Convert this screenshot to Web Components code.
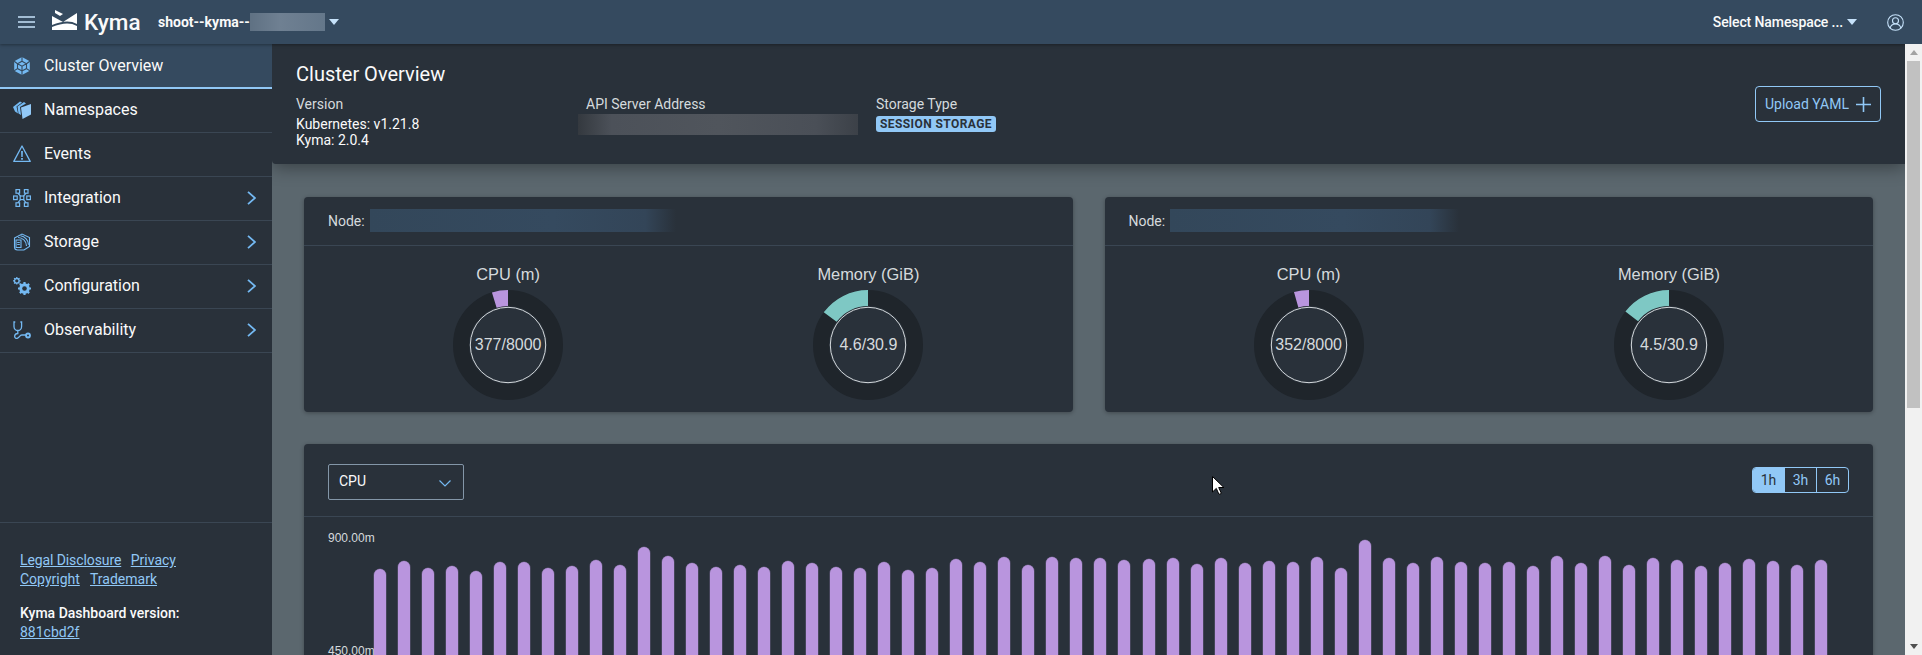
<!DOCTYPE html>
<html lang="en">
<head>
<meta charset="utf-8">
<title>Kyma</title>
<style>
  html, body { margin: 0; height: 100%; overflow: hidden; background: #5b676e; }
  body { font-family: Roboto, "Liberation Sans", sans-serif; color: #fafafa; }
  #app { display: grid; grid-template-columns: 272px 1fr; grid-template-rows: 44px 1fr; height: 100vh; }
  shell-bar { grid-column: 1 / 3; }
  #main { display: flex; min-width: 0; min-height: 0; overflow: hidden; }
  #content { flex: 1; min-width: 0; }
  #cards { display: grid; grid-template-columns: 1fr 1fr; gap: 32px; padding: 33px 32px 32px; }
  #cursor { position: absolute; left: 1212px; top: 476px; }
</style>
</head>
<body>
<div id="app">
  <shell-bar></shell-bar>
  <side-nav>
    <nav-item label="Cluster Overview" active>
      <svg slot="icon" viewBox="0 0 18 18"><path fill="#74b9f2" d="M9 0l7.800 4.300v9.400L9 18l-7.800-4.300V4.300z"/><path fill="none" stroke="#354a5f" stroke-width="1.100" d="M9 4.200l4.500 2.500v4.900L9 14l-4.500-2.400V6.700zM4.500 6.700L9 9.200l4.500-2.500M9 9.200V14M9 0v4.200M1.200 4.300l3.300 2.400M16.800 4.300l-3.300 2.400M1.200 13.700l3.300-2.100M16.800 13.700l-3.300-2.100M9 14v4"/></svg>
    </nav-item>
    <nav-item label="Namespaces">
      <svg slot="icon" viewBox="0 0 18 18"><path fill="#74b9f2" d="M0 6l7-5.500 2 1L3.500 5.500 5 12.500 2 10.500zM4.500 5.500L11 1l2 1.500L7 6l1 8-2.500-1.500z"/><path fill="#92c9f7" d="M8 6.500L18 3v10.500L9.500 18z"/></svg>
    </nav-item>
    <nav-item label="Events">
      <svg slot="icon" viewBox="0 0 18 18"><path fill="none" stroke="#74b9f2" stroke-width="1.300" stroke-linejoin="round" d="M9 1L.8 16.400h16.400z"/><path fill="#74b9f2" d="M8.100 6h1.800l-.2 6H8.300zM8.100 13h1.800v1.800H8.100z"/></svg>
    </nav-item>
    <nav-item label="Integration" expandable>
      <svg slot="icon" viewBox="0 0 18 18"><g fill="none" stroke="#74b9f2" stroke-width="1.200"><rect x="3" y=".6" width="3.600" height="3.600"/><rect x="11.400" y=".6" width="3.600" height="3.600"/><rect x="3" y="13.800" width="3.600" height="3.600"/><rect x="11.400" y="13.800" width="3.600" height="3.600"/><rect x=".6" y="7" width="3.600" height="3.600"/><rect x="7.200" y="7" width="3.600" height="3.600"/><rect x="13.800" y="7" width="3.600" height="3.600"/><path d="M4.800 4.200L7.500 7M13.200 4.200L10.500 7M4.800 13.800l2.700-3.200M13.200 13.800l-2.700-3.200"/></g></svg>
    </nav-item>
    <nav-item label="Storage" expandable>
      <svg slot="icon" viewBox="0 0 18 18"><g fill="none" stroke="#74b9f2" stroke-width="1.100"><path d="M1.500 5L9 1l7.500 3.500v9L11 17H4.500c-1.700 0-3-1.300-3-3z"/><path d="M5 4.500c4.500 0 8.500 3.500 8.500 8.500M7.500 2.800c4.500 .5 8 4.500 8 9M3 7h5v7.500H3zM4.200 9.500h2.600M4.200 11.500h2.600"/></g></svg>
    </nav-item>
    <nav-item label="Configuration" expandable>
      <svg slot="icon" viewBox="0 0 18 18"><circle cx="11.500" cy="11.500" r="3.900" fill="none" stroke="#74b9f2" stroke-width="2.600"/><path stroke="#74b9f2" stroke-width="2.200" d="M11.500 5v13M5 11.500h13M6.900 6.900l9.200 9.200M16.100 6.900l-9.200 9.200"/><circle cx="11.500" cy="11.500" r="2.300" fill="#29313a"/><circle cx="3.800" cy="3.800" r="2.300" fill="none" stroke="#74b9f2" stroke-width="1.300"/><path stroke="#74b9f2" stroke-width="1.200" d="M3.800 0v1.500M3.800 6.100v1.500M0 3.800h1.500M6.100 3.800h1.500M1.100 1.100l1 1M5.500 5.500l1 1M6.500 1.100l-1 1M2.100 5.500l-1 1"/></svg>
    </nav-item>
    <nav-item label="Observability" expandable>
      <svg slot="icon" viewBox="0 0 18 18"><path fill="none" stroke="#74b9f2" stroke-width="1.300" stroke-linecap="round" d="M1.800 1H1v4.500c0 2.500 2 4 3.800 4s3.800-1.500 3.800-4V1h-.8M4.800 9.500v3C1 12.500 .6 17.400 3.800 17.400c2.600 0 2.600-3.400 5-3.400h4"/><circle cx="15" cy="14.500" r="2.900" fill="#74b9f2"/><circle cx="15" cy="14.500" r="1" fill="#29313a"/></svg>
    </nav-item>
  </side-nav>
  <div id="main">
    <div id="content">
      <page-head></page-head>
      <div id="cards">
        <node-card blur="306">
          <donut-gauge title="CPU (m)" used="377" total="8000" color="#b995de"></donut-gauge>
          <donut-gauge title="Memory (GiB)" used="4.6" total="30.9" color="#7ec8c4"></donut-gauge>
        </node-card>
        <node-card blur="289">
          <donut-gauge title="CPU (m)" used="352" total="8000" color="#b995de"></donut-gauge>
          <donut-gauge title="Memory (GiB)" used="4.5" total="30.9" color="#7ec8c4"></donut-gauge>
        </node-card>
        <metrics-card style="grid-column: 1 / 3"></metrics-card>
      </div>
    </div>
    <page-scrollbar></page-scrollbar>
  </div>
</div>
<svg id="cursor" width="13" height="19" viewBox="0 0 13 19"><path fill="#fff" stroke="#000" stroke-width="1" d="M.5 .5v15.500l3.800-3.600 2.700 6 2.400-1-2.700-5.900h5.200z"/></svg>

<script>
const UI_FONT = 'Roboto, "Liberation Sans", sans-serif';

class ShellBar extends HTMLElement {
  constructor() {
    super();
    this.attachShadow({ mode: 'open' });
  }

  connectedCallback() {
    this.shadowRoot.innerHTML = `
      <style>
        :host { display: flex; align-items: center; height: 44px; background: #354a5f; position: relative; z-index: 3;
          box-shadow: 0 1px 3px rgba(0,0,0,.35); font-family: ${UI_FONT}; color: #fafafa; }
        .menu { margin-left: 18px; width: 17px; height: 12px; display: block; }
        .logo { margin-left: 17px; width: 25px; height: 20px; margin-top: -4px; }
        .brand { margin-left: 7px; font-size: 22.500px; font-weight: 500; width: 74px; }
        .cluster { font-size: 14px; font-weight: 700; }
        .blur { width: 75px; height: 18px; background: linear-gradient(90deg, #5f7183, #6f8092 40%, #64778a); }
        .caret { width: 0; height: 0; border: 5px solid transparent; border-top: 6px solid #c6e2fa; border-bottom: 0; }
        .cluster + .blur + .caret { margin-left: 4px; }
        .right { margin-left: auto; display: flex; align-items: center; }
        .ns { font-size: 14px; font-weight: 500; margin-right: 4px; letter-spacing: -.1px; }
        .user { margin: 0 18px 0 30px; width: 17px; height: 17px; }
      </style>
      <svg class="menu" viewBox="0 0 17 12"><path stroke="#c6e2fa" stroke-width="1.400" d="M0 1h17M0 6h17M0 11h17"/></svg>
      <svg class="logo" viewBox="0 0 25 20"><path fill="#fff" d="M3 0l8 4-3 2-5-3zM0 6l11 6L25 3v11c-7-4-15-3-25 1zM0 17c10-4 18-5 25-1v4H0z"/></svg>
      <span class="brand">Kyma</span>
      <span class="cluster">shoot--kyma--</span>
      <span class="blur"></span>
      <span class="caret"></span>
      <div class="right">
        <span class="ns">Select Namespace ...</span>
        <span class="caret"></span>
        <svg class="user" viewBox="0 0 17 17"><g fill="none" stroke="#c6e2fa" stroke-width="1.100"><circle cx="8.500" cy="8.500" r="7.800"/><circle cx="8.500" cy="6.800" r="3"/><path d="M3.200 14c.6-2.800 2.800-4 5.300-4s4.700 1.200 5.300 4"/></g></svg>
      </div>
    `;
  }
}

class SideNav extends HTMLElement {
  constructor() {
    super();
    this.attachShadow({ mode: 'open' });
  }

  connectedCallback() {
    this.shadowRoot.innerHTML = `
      <style>
        :host { display: flex; flex-direction: column; background: #29313a; min-height: 0; font-family: ${UI_FONT}; color: #fafafa; }
        .items { flex: 1; }
        footer { height: 133px; box-sizing: border-box; border-top: 1px solid #3a4653; padding: 28px 20px 0; font-size: 14px; line-height: 19px; }
        a { color: #91c8f6; text-decoration: underline; margin-right: 7px; }
        .legal { letter-spacing: -.1px; margin-right: 6px; }
        .version { margin-top: 15px; font-weight: 500; }
      </style>
      <div class="items"><slot></slot></div>
      <footer>
        <div><a class="legal">Legal Disclosure</a> <a>Privacy</a></div>
        <div><a>Copyright</a> <a>Trademark</a></div>
        <div class="version">Kyma Dashboard version:</div>
        <div><a>881cbd2f</a></div>
      </footer>
    `;
  }
}

class NavItem extends HTMLElement {
  constructor() {
    super();
    this.attachShadow({ mode: 'open' });
  }

  connectedCallback() {
    const chevron = this.hasAttribute('expandable')
      ? '<svg class="chevron" viewBox="0 0 9 14"><path fill="none" stroke="#74b9f2" stroke-width="1.800" d="M1 .8L8 7l-7 6.200"/></svg>'
      : '';
    this.shadowRoot.innerHTML = `
      <style>
        :host { display: flex; align-items: center; height: 44px; box-sizing: border-box; padding-bottom: 2px; border-bottom: 1px solid #3a4653; font-size: 16px; }
        :host([active]) { height: 45px; padding-bottom: 0; background: #354a5f; border-bottom: 2px solid #91c8f6; }
        .icon { width: 18px; height: 18px; margin: 0 13px; display: block; }
        ::slotted(svg) { width: 18px; height: 18px; display: block; }
        .chevron { margin-left: auto; margin-right: 16px; width: 9px; height: 14px; }
      </style>
      <span class="icon"><slot name="icon"></slot></span>
      <span>${this.getAttribute('label')}</span>
      ${chevron}
    `;
  }
}

class PageHead extends HTMLElement {
  constructor() {
    super();
    this.attachShadow({ mode: 'open' });
  }

  connectedCallback() {
    this.shadowRoot.innerHTML = `
      <style>
        :host { display: flex; align-items: center; height: 120px; box-sizing: border-box; padding: 16px 24px; background: #29313a;
          box-shadow: 0 3px 18px rgba(0,0,0,.4); border-bottom-left-radius: 4px; position: relative; z-index: 2;
          font-family: ${UI_FONT}; color: #fafafa; }
        .left { flex: 1; }
        h1 { margin: 0 0 6px; font-size: 20px; line-height: 28px; font-weight: 400; }
        .cols { display: grid; grid-template-columns: 290px 290px 1fr; }
        .label { font-size: 14px; line-height: 20px; color: #d5dadd; margin-bottom: 2px; }
        .value { font-size: 14px; line-height: 16px; }
        .blur { margin: -2px 0 0 -8px; width: 280px; height: 21px; background: linear-gradient(90deg, #34393f, #4c5159 12%, #50555c 50%, #4a4f57 85%, #3c4148); }
        .badge { display: block; width: fit-content; margin-top: 2px; background: #91c8f6; color: #29313a; font-size: 12px; font-weight: 700; line-height: 16px;
          padding: 0 4px; border-radius: 3px; text-transform: uppercase; letter-spacing: .42px; }
        button { width: 126px; height: 36px; box-sizing: border-box; background: transparent; color: #91c8f6; border: 1px solid #91c8f6;
          border-radius: 4px; font: 14px ${UI_FONT}; display: flex; align-items: center; justify-content: center; gap: 7px; padding: 0; }
        button svg { width: 15px; height: 15px; }
      </style>
      <div class="left">
        <h1>Cluster Overview</h1>
        <div class="cols">
          <div><div class="label">Version</div><div class="value">Kubernetes: v1.21.8</div><div class="value">Kyma: 2.0.4</div></div>
          <div><div class="label">API Server Address</div><div class="blur"></div></div>
          <div><div class="label">Storage Type</div><span class="badge">Session Storage</span></div>
        </div>
      </div>
      <button>Upload YAML <svg viewBox="0 0 15 15"><path stroke="#91c8f6" stroke-width="1.600" d="M7.500 0v15M0 7.500h15"/></svg></button>
    `;
  }
}

class NodeCard extends HTMLElement {
  constructor() {
    super();
    this.attachShadow({ mode: 'open' });
  }

  connectedCallback() {
    const blur = this.getAttribute('blur') || 250;
    this.shadowRoot.innerHTML = `
      <style>
        :host { display: block; background: #29313a; border-radius: 4px; box-shadow: 0 1px 4px rgba(0,0,0,.3); font-family: ${UI_FONT}; color: #fafafa; }
        header { display: flex; align-items: center; height: 49px; box-sizing: border-box; padding: 0 24px; border-bottom: 1px solid #3a4653;
          font-size: 14px; color: #d5dadd; gap: 5px; }
        .blur { width: ${blur}px; height: 23px; margin-top: -2px; background: linear-gradient(90deg, #33475a, #354a5f 60%, #334558 90%, #29313a); }
        .gauges { display: grid; grid-template-columns: 1fr 1fr; padding: 17px 24px 12px; }
      </style>
      <header><span>Node:</span><span class="blur"></span></header>
      <div class="gauges"><slot></slot></div>
    `;
  }
}

class DonutGauge extends HTMLElement {
  constructor() {
    super();
    this.attachShadow({ mode: 'open' });
  }

  connectedCallback() {
    const used = parseFloat(this.getAttribute('used'));
    const total = parseFloat(this.getAttribute('total'));
    const angle = used / total * 2 * Math.PI;
    const point = r => `${(55 - r * Math.sin(angle)).toFixed(2)} ${(55 - r * Math.cos(angle)).toFixed(2)}`;
    this.shadowRoot.innerHTML = `
      <style>
        :host { display: flex; flex-direction: column; align-items: center; font-family: "Liberation Sans", Arial, sans-serif; color: #d5dadd; font-size: 16px; }
        .title { font-size: 16.400px; line-height: 20px; margin: 1px 0 6px; }
        .ring { position: relative; width: 110px; height: 110px; }
        svg { display: block; }
        .value { position: absolute; inset: 0; display: flex; align-items: center; justify-content: center; }
      </style>
      <div class="title">${this.getAttribute('title')}</div>
      <div class="ring">
        <svg width="110" height="110" viewBox="0 0 110 110">
          <circle cx="55" cy="55" r="47" fill="none" stroke="#1f252b" stroke-width="16"/>
          <path fill="${this.getAttribute('color')}" d="M55 0A55 55 0 0 0 ${point(55)}L${point(39)}A39 39 0 0 1 55 16z"/>
          <circle cx="55" cy="55" r="37.700" fill="none" stroke="#d5dadd" stroke-width="1"/>
        </svg>
        <div class="value">${this.getAttribute('used')}/${this.getAttribute('total')}</div>
      </div>
    `;
  }
}

class BarChart extends HTMLElement {
  constructor() {
    super();
    this.attachShadow({ mode: 'open' });
  }

  connectedCallback() {
    // y of each bar top, counted from the top of the chart body (y 517)
    const tops = [569,561,568,566,571,562,562,568,566,560,565,547,556,563,567,565,567,561,563,567,568,562,570,568,559,562,557,565,557,558,558,560,559,558,564,558,563,561,562,557,568,540,558,563,557,562,563,562,566,556,563,556,565,558,560,566,563,559,561,565,560];
    const bars = tops.map(top => `<i style="margin-top:${top - 517}px"></i>`).join('');
    this.shadowRoot.innerHTML = `
      <style>
        :host { display: flex; padding-left: 24px; height: 240px; font-family: "Liberation Sans", Arial, sans-serif; }
        .axis { width: 46px; padding-top: 14px; font-size: 12px; line-height: 14px; color: #d5dadd; }
        .axis div + div { margin-top: 99px; }
        .bars { display: flex; gap: 12.030px; align-items: stretch; }
        i { display: block; width: 12px; background: #b995de; border-radius: 6px 6px 0 0; box-shadow: 0 0 0 .5px rgba(185,149,222,.4); }
      </style>
      <div class="axis"><div>900.00m</div><div>450.00m</div></div>
      <div class="bars">${bars}</div>
    `;
  }
}

class MetricsCard extends HTMLElement {
  constructor() {
    super();
    this.attachShadow({ mode: 'open' });
  }

  connectedCallback() {
    this.shadowRoot.innerHTML = `
      <style>
        :host { display: block; background: #29313a; border-radius: 4px; box-shadow: 0 1px 4px rgba(0,0,0,.3); font-family: ${UI_FONT}; color: #fafafa; }
        header { display: flex; align-items: center; justify-content: space-between; height: 73px; box-sizing: border-box;
          padding: 20px 24px 16px; border-bottom: 1px solid #3a4653; }
        .select { display: flex; align-items: center; justify-content: space-between; width: 136px; height: 36px; box-sizing: border-box;
          border: 1px solid #8396a8; border-radius: 2px; padding: 0 12px 2px 10px; font-size: 14px; }
        .select svg { width: 12px; height: 7px; margin-top: 5px; }
        .range { display: flex; height: 26px; box-sizing: border-box; border: 1px solid #91c8f6; border-radius: 4px; overflow: hidden; margin-top: -4px; }
        .range span { display: flex; align-items: center; justify-content: center; width: 31px; font-size: 14px; color: #91c8f6; }
        .range span + span { border-left: 1px solid #91c8f6; }
        .range .on { background: #91c8f6; color: #29313a; }
      </style>
      <header>
        <div class="select"><span>CPU</span><svg viewBox="0 0 12 7"><path fill="none" stroke="#74b9f2" stroke-width="1.200" d="M.5 .5L6 6l5.500-5.500"/></svg></div>
        <div class="range"><span class="on">1h</span><span>3h</span><span>6h</span></div>
      </header>
      <bar-chart></bar-chart>
    `;
  }
}

class PageScrollbar extends HTMLElement {
  constructor() {
    super();
    this.attachShadow({ mode: 'open' });
  }

  connectedCallback() {
    this.shadowRoot.innerHTML = `
      <style>
        :host { display: flex; flex-direction: column; align-items: center; flex: none; width: 17px; background: #f1f1f1; position: relative; z-index: 3; }
        .up, .down { width: 0; height: 0; border: 4px solid transparent; }
        .up { border-bottom: 5px solid #a3a3a3; border-top: 0; margin-top: 6px; }
        .down { border-top: 5px solid #505050; border-bottom: 0; margin-top: auto; margin-bottom: 6px; }
        .thumb { width: 13px; height: 347px; margin-top: 6px; background: #c1c1c1; }
      </style>
      <span class="up"></span>
      <span class="thumb"></span>
      <span class="down"></span>
    `;
  }
}

customElements.define('shell-bar', ShellBar);
customElements.define('side-nav', SideNav);
customElements.define('nav-item', NavItem);
customElements.define('page-head', PageHead);
customElements.define('node-card', NodeCard);
customElements.define('donut-gauge', DonutGauge);
customElements.define('bar-chart', BarChart);
customElements.define('metrics-card', MetricsCard);
customElements.define('page-scrollbar', PageScrollbar);
</script>
</body>
</html>
